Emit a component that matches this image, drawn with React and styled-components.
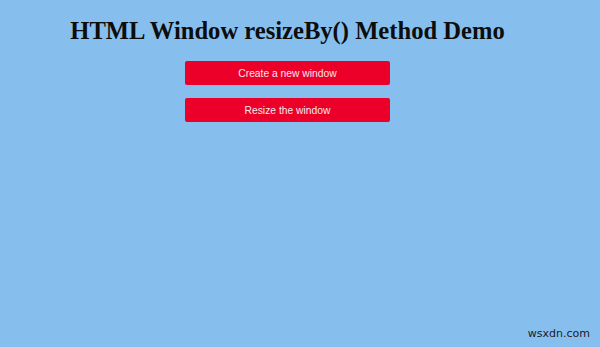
import React from 'react'
import styled, { createGlobalStyle } from 'styled-components'

const GlobalStyle = createGlobalStyle`
  html, body {
    margin: 0;
    padding: 0;
    background: #86bfee;
  }
  body {
    width: 600px;
    height: 347px;
    overflow: hidden;
  }
`

const Page = styled.div`
  position: relative;
  width: 600px;
  height: 347px;
  background: #86bfee;
`

const Content = styled.div`
  width: 575px;
  display: flex;
  flex-direction: column;
  align-items: center;
  padding-top: 17px;
`

const Title = styled.h1`
  margin: 0 0 16px;
  font-family: "Liberation Serif", "Times New Roman", serif;
  font-weight: 700;
  font-size: 24.6px;
  line-height: 28px;
  color: #0d0d0d;
`

const Button = styled.button`
  width: 205px;
  height: 24px;
  margin-bottom: 13px;
  border: none;
  border-radius: 2px;
  background: #ec0029;
  color: #f4e8ec;
  font-family: "Liberation Sans", Arial, sans-serif;
  font-size: 10.3px;
  cursor: pointer;
`

const Watermark = styled.span`
  position: absolute;
  right: 10px;
  bottom: 7px;
  font-family: "DejaVu Sans", Verdana, sans-serif;
  font-size: 11px;
  color: #1a1a2a;
`

export default function App() {
  return (
    <Page>
      <GlobalStyle />
      <Content>
        <Title>HTML Window resizeBy() Method Demo</Title>
        <Button>Create a new window</Button>
        <Button>Resize the window</Button>
      </Content>
      <Watermark>wsxdn.com</Watermark>
    </Page>
  )
}
